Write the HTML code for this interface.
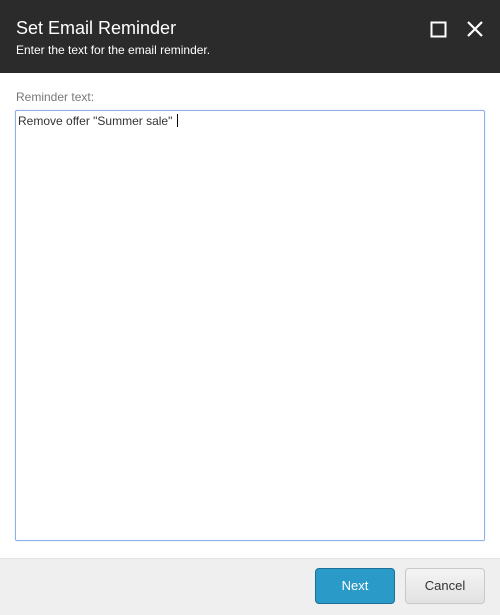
<!DOCTYPE html>
<html><head><style>
body{margin:0;width:500px;height:614px;background:#fff;font-family:"Liberation Sans",Arial,sans-serif;position:relative;overflow:hidden}
.hd{position:absolute;left:0;top:0;width:500px;height:73px;background:#2b2b2b;color:#fff}
.t{position:absolute;left:16px;top:18px;font-size:18px}
.s{position:absolute;left:16px;top:43px;font-size:12px}
.lbl{position:absolute;left:16px;top:90px;font-size:12px;color:#777}
.ta{position:absolute;left:15px;top:110px;width:468px;height:429px;border:1px solid #8fb0ec;border-radius:2px;box-shadow:0 0 1px #a9c2f0}
.tx{position:absolute;left:2px;top:3px;font-size:12px;color:#333}
.tx span{display:inline-block;width:1px;height:13px;background:#000;vertical-align:-2px;margin-left:5px}
.ft{position:absolute;left:0;top:558px;width:500px;height:56px;background:#efefef;border-top:1px solid #e2e2e2}
.b{position:absolute;top:9px;width:78px;height:34px;border-radius:4px;font-size:13px;text-align:center;line-height:34px}
.n{left:315px;background:#2a9ac9;border:1px solid #1d6f95;color:#fff}
.c{left:405px;background:linear-gradient(#f4f4f4,#e2e2e2);border:1px solid #c8c8c8;color:#333}
</style></head><body>
<div class="hd"><div class="t">Set Email Reminder</div><div class="s">Enter the text for the email reminder.</div>
<svg style="position:absolute;left:430px;top:20px" width="54" height="18"><rect x="1.5" y="2.5" width="14" height="14" fill="none" stroke="#fff" stroke-width="2"/><path d="M38 2L52 16M52 2L38 16" stroke="#fff" stroke-width="2.2"/></svg></div>
<div class="lbl">Reminder text:</div>
<div class="ta"><div class="tx">Remove offer "Summer sale"<span></span></div></div>
<div class="ft"><div class="b n">Next</div><div class="b c">Cancel</div></div>
</body></html>
